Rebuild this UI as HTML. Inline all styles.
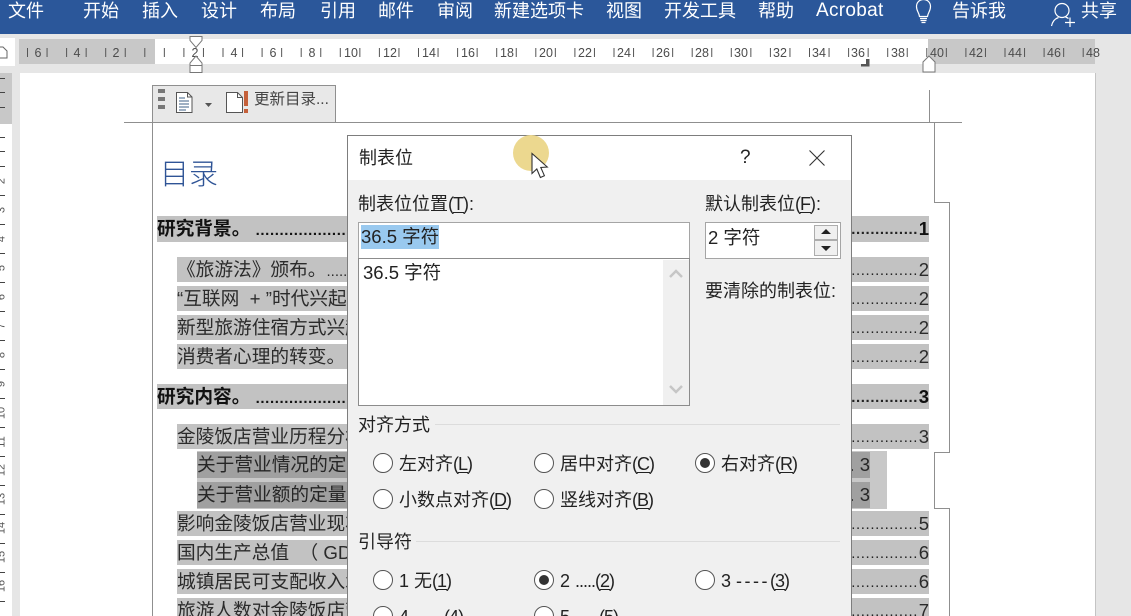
<!DOCTYPE html>
<html lang="zh-CN">
<head>
<meta charset="utf-8">
<title>制表位</title>
<style>
html,body{margin:0;padding:0;width:1131px;height:616px;overflow:hidden;background:#e6e6e6}
body{position:relative;font-family:"Liberation Sans","Noto Sans CJK SC",sans-serif;color:#222}
div,span,svg{position:absolute;box-sizing:border-box}
u{text-underline-offset:2px;text-decoration-thickness:1px;margin:0 -1px}
.bar{left:0;top:0;width:1131px;height:34px;background:#2b579a}
.m{top:-2px;color:#fff;font-size:18px;line-height:26px;white-space:nowrap}
.page{left:20px;top:73px;width:1076px;height:543px;background:#fff;border-right:1px solid #c4c4c4}
.g{background:#8f8f8f}
.r{height:25px;background:#c2c2c2;line-height:25px;font-size:18.7px;white-space:nowrap;color:#2b2b2b}
.r .t{left:0;top:0;width:190px;height:25px;overflow:hidden}
.r .d{right:11px;top:1px;font-size:15px;letter-spacing:.6px;color:#222}
.r .n{right:0;top:0;font-size:18.5px}
.l1{left:157px;width:772px;font-weight:bold;color:#111}
.l1 .d{font-weight:bold}
.l2{left:177px;width:752px}
.dark{left:197px;width:673px;height:26px;background:#a0a0a0;line-height:26px;font-size:18.7px;white-space:nowrap;color:#262626}
.dlg{left:347px;top:135px;width:505px;height:490px;background:#f0f0f0;border:1px solid #7d7d7d}
.hd{left:0;top:0;width:503px;height:44px;background:#fff}
.x{font-size:18px;line-height:24px;white-space:nowrap;color:#222}
.field{background:#fff;border:1px solid #a5a5a5}
.radio{width:20px;height:20px;border:1.3px solid #555;border-radius:50%;background:#fff}
.radio.on::after{content:"";position:absolute;left:3.7px;top:3.7px;width:10px;height:10px;border-radius:50%;background:#333}
.hr{height:1px;background:#dcdcdc}
</style>
</head>
<body>
<div class="bar"></div>
<span class="m" style="left:8px">文件</span>
<span class="m" style="left:83px">开始</span>
<span class="m" style="left:142px">插入</span>
<span class="m" style="left:201px">设计</span>
<span class="m" style="left:260px">布局</span>
<span class="m" style="left:320px">引用</span>
<span class="m" style="left:378px">邮件</span>
<span class="m" style="left:437px">审阅</span>
<span class="m" style="left:494px">新建选项卡</span>
<span class="m" style="left:606px">视图</span>
<span class="m" style="left:664px">开发工具</span>
<span class="m" style="left:758px">帮助</span>
<span class="m" style="left:816px;font-size:19px;letter-spacing:.3px">Acrobat</span>
<span class="m" style="left:952px">告诉我</span>
<span class="m" style="left:1081px">共享</span>
<svg style="left:912px;top:0" width="24" height="26" viewBox="0 0 24 26" fill="none" stroke="#fff" stroke-width="1.2"><path d="M7.5 16.5C7 12.5 4.5 11 4.5 6.5 4.5 2.5 7.5-.5 11.5-.5s7 3 7 7c0 4.500-2.500 6-3 10z"/><path d="M8 18.500h7M8.500 20.500h6M9.500 22.500h4"/></svg>
<svg style="left:1050px;top:0" width="32" height="28" viewBox="0 0 32 28" fill="none" stroke="#fff" stroke-width="1.2"><circle cx="12" cy="10.500" r="7"/><path d="M1.500 26c1-5 4-7.500 7-8.500M15.500 17c1 .3 2 .8 3 1.500"/><path d="M15 22.500h10M20 17.500v9.500"/></svg>

<!-- ruler -->
<svg style="left:0;top:34px" width="1131" height="40" viewBox="0 34 1131 40">
<rect x="0" y="34" width="1131" height="40" fill="#e6e6e6"/>
<rect x="0" y="38" width="15" height="28" fill="#fff"/>
<path d="M0 47h3l4 4v7H0" fill="#fff" stroke="#666"/>
<rect x="19" y="39" width="136" height="25" fill="#c8c8c8"/>
<rect x="155" y="39" width="773" height="25" fill="#fff"/>
<rect x="928" y="39" width="167" height="25" fill="#c8c8c8"/>
<line x1="27" y1="52.500" x2="1098" y2="52.500" stroke="#555" stroke-width="9" stroke-dasharray="1 18.55"/>
<g font-family="Liberation Sans,sans-serif" font-size="12.500" fill="#4c4c4c" text-anchor="middle">
<text x="38" y="57">6</text><text x="77" y="57">4</text><text x="116" y="57">2</text>
<text x="195" y="57">2</text><text x="234" y="57">4</text><text x="273" y="57">6</text><text x="312" y="57">8</text>
<text x="351" y="57">10</text><text x="390" y="57">12</text><text x="429" y="57">14</text><text x="468" y="57">16</text>
<text x="507" y="57">18</text><text x="546" y="57">20</text><text x="585" y="57">22</text><text x="624" y="57">24</text>
<text x="663" y="57">26</text><text x="702" y="57">28</text><text x="741" y="57">30</text><text x="780" y="57">32</text>
<text x="819" y="57">34</text><text x="858" y="57">36</text><text x="898" y="57">38</text><text x="937" y="57">40</text>
<text x="976" y="57">42</text><text x="1015" y="57">44</text><text x="1054" y="57">46</text><text x="1093" y="57">48</text>
</g>
<path d="M190 36.500h12v4l-6 7-6-7z" fill="#fff" stroke="#777"/>
<path d="M196 56l6 7v2.500h-12V63z" fill="#fff" stroke="#777"/>
<rect x="190" y="65.500" width="12" height="7" fill="#fff" stroke="#777"/>
<path d="M929 56l6 6v10h-12V62z" fill="#fff" stroke="#777"/>
<path d="M866 59h3.500v7.500H861V64h5z" fill="#555"/>
</svg>

<div class="page"></div>
<!-- vertical ruler -->
<svg style="left:0;top:73px" width="20" height="543" viewBox="0 73 20 543">
<rect x="0" y="73" width="12" height="543" fill="#fff"/>
<rect x="0" y="73" width="12" height="51" fill="#c8c8c8"/>
<rect x="12" y="73" width="8" height="543" fill="#e6e6e6"/>
<path d="M0 78.500h5M0 92.500h5M0 107.500h5M0 137.500h5M0 151.500h5M0 166.500h5M0 195.500h5M0 224.500h5M0 253.500h5M0 282.500h5M0 311.500h5M0 340.500h5M0 369.500h5M0 398.500h5M0 427.500h5M0 456.500h5M0 485.500h5M0 514.500h5M0 543.500h5M0 572.500h5M0 601.500h5" stroke="#444"/>
<g font-family="Liberation Sans,sans-serif" font-size="11" fill="#555" text-anchor="middle">
<text transform="translate(4.500 181) rotate(-90)">2</text><text transform="translate(4.500 210) rotate(-90)">3</text>
<text transform="translate(4.500 239) rotate(-90)">4</text><text transform="translate(4.500 268) rotate(-90)">5</text>
<text transform="translate(4.500 297) rotate(-90)">6</text><text transform="translate(4.500 326) rotate(-90)">7</text>
<text transform="translate(4.500 355) rotate(-90)">8</text><text transform="translate(4.500 384) rotate(-90)">9</text>
<text transform="translate(4.500 413) rotate(-90)">10</text><text transform="translate(4.500 442) rotate(-90)">11</text>
<text transform="translate(4.500 470) rotate(-90)">12</text><text transform="translate(4.500 499) rotate(-90)">13</text>
<text transform="translate(4.500 528) rotate(-90)">14</text><text transform="translate(4.500 557) rotate(-90)">15</text>
<text transform="translate(4.500 586) rotate(-90)">16</text>
</g>
</svg>

<!-- guides -->
<div class="g" style="left:124px;top:122px;width:838px;height:1px"></div>
<div class="g" style="left:152px;top:122px;width:1px;height:494px"></div>
<div class="g" style="left:929px;top:90px;width:1px;height:32px"></div>
<div class="g" style="left:934px;top:122px;width:1px;height:80px"></div>
<div class="g" style="left:934px;top:202px;width:16px;height:1px"></div>
<div class="g" style="left:949px;top:202px;width:1px;height:250px"></div>
<div class="g" style="left:934px;top:452px;width:16px;height:1px"></div>
<div class="g" style="left:934px;top:452px;width:1px;height:56px"></div>
<div class="g" style="left:934px;top:508px;width:16px;height:1px"></div>
<div class="g" style="left:949px;top:508px;width:1px;height:108px"></div>

<!-- TOC toolbar -->
<div style="left:152px;top:85px;width:184px;height:38px;background:#e8e8e8;border:1px solid #8f8f8f"></div>
<div style="left:158px;top:89px;width:7px;height:4px;background:#777"></div>
<div style="left:158px;top:97px;width:7px;height:4px;background:#777"></div>
<div style="left:158px;top:105px;width:7px;height:4px;background:#777"></div>
<svg style="left:174px;top:90px" width="40" height="26" viewBox="0 0 40 26" fill="#fff" stroke="#555"><path d="M2.500 2.500h11l4.500 4.500v15.500H2.500z"/><path d="M13.500 2.500V7H18" fill="none"/><path d="M5 8h6M5 11h10M5 14h10M5 17h10M5 20h7" stroke="#3f6187" stroke-width="1"/><path d="M31 13h7l-3.500 4z" fill="#555" stroke="none"/></svg>
<svg style="left:224px;top:90px" width="28" height="26" viewBox="0 0 28 26"><path d="M2.500 2.500h11l5 5v15h-16z" fill="#fff" stroke="#555"/><path d="M13.500 2.500v5h5" fill="none" stroke="#555"/><rect x="20" y="1" width="4" height="15" fill="#c5603a"/><rect x="20" y="19" width="4" height="4" fill="#c5603a"/></svg>
<span style="left:254px;top:88px;font-size:15.500px;line-height:24px;color:#444;white-space:nowrap">更新目录...</span>

<!-- TOC -->
<span style="left:160px;top:155px;font-size:29px;line-height:40px;color:#2f5496;font-weight:300">目录</span>

<div class="r l1" style="top:216px;height:26px"><span class="t">研究背景。 <span style="position:static;font-size:15px;letter-spacing:.6px">..............................</span></span><span class="d">...............</span><span class="n">1</span></div>
<div class="r l2" style="top:257px"><span class="t">《旅游法》颁布。<span style="position:static;font-size:15px">.......</span></span><span class="d">...............</span><span class="n">2</span></div>
<div class="r l2" style="top:286px"><span class="t">“互联网&nbsp;&nbsp;+&nbsp;”时代兴起。</span><span class="d">...............</span><span class="n">2</span></div>
<div class="r l2" style="top:315px"><span class="t">新型旅游住宿方式兴起。</span><span class="d">...............</span><span class="n">2</span></div>
<div class="r l2" style="top:344px"><span class="t">消费者心理的转变。</span><span class="d">...............</span><span class="n">2</span></div>
<div class="r l1" style="top:384px"><span class="t">研究内容。 <span style="position:static;font-size:15px;letter-spacing:.6px">..............................</span></span><span class="d">...............</span><span class="n">3</span></div>
<div class="r l2" style="top:424px"><span class="t">金陵饭店营业历程分析</span><span class="d">...............</span><span class="n">3</span></div>
<div style="left:197px;top:451px;width:690px;height:58px;background:#c8c8c8"></div>
<div class="dark" style="top:452px"><span style="left:0;top:0;width:150px;overflow:hidden;height:26px">关于营业情况的定性</span><span style="right:0;top:0;font-size:18.500px">. 3</span></div>
<div class="dark" style="top:482px"><span style="left:0;top:0;width:150px;overflow:hidden;height:26px">关于营业额的定量分</span><span style="right:0;top:0;font-size:18.500px">. 3</span></div>
<div class="r l2" style="top:511px"><span class="t">影响金陵饭店营业现状</span><span class="d">...............</span><span class="n">5</span></div>
<div class="r l2" style="top:540px"><span class="t">国内生产总值&nbsp;&nbsp;（ GDP</span><span class="d">...............</span><span class="n">6</span></div>
<div class="r l2" style="top:569px"><span class="t">城镇居民可支配收入水平</span><span class="d">...............</span><span class="n">6</span></div>
<div class="r l2" style="top:598px"><span class="t">旅游人数对金陵饭店营业</span><span class="d">...............</span><span class="n">7</span></div>

<!-- dialog -->
<div class="dlg">
<div class="hd"></div>
<span class="x" style="left:11px;top:10px">制表位</span>
<span class="x" style="left:392px;top:10px;font-size:19px">?</span>
<svg style="left:460px;top:13px" width="18" height="18" viewBox="0 0 18 18" stroke="#333" stroke-width="1.100" fill="none"><path d="M1.500 1.500l15 15M16.500 1.500l-15 15"/></svg>

<span class="x" style="left:10px;top:56px">制表位位置(<u>T</u>):</span>
<span class="x" style="left:357px;top:56px">默认制表位(<u>F</u>):</span>
<div class="field" style="left:10px;top:86px;width:332px;height:37px"></div>
<div style="left:13px;top:89px;width:78px;height:24px;background:#99c9ef"></div>
<span class="x" style="left:13px;top:89px;font-size:18.500px">36.5 字符</span>
<div class="field" style="left:10px;top:122px;width:332px;height:148px;border-color:#8c8c8c"></div>
<div style="left:315px;top:124px;width:26px;height:145px;background:#f0f0f0"></div>
<svg style="left:318px;top:130px" width="20" height="14" viewBox="0 0 20 14" fill="none" stroke="#c6c6c6" stroke-width="2.500"><path d="M4 11l6-6 6 6"/></svg>
<svg style="left:318px;top:247px" width="20" height="14" viewBox="0 0 20 14" fill="none" stroke="#c6c6c6" stroke-width="2.500"><path d="M4 3l6 6 6-6"/></svg>
<span class="x" style="left:15px;top:125px;font-size:18.500px">36.5 字符</span>

<div class="field" style="left:357px;top:86px;width:136px;height:37px"></div>
<span class="x" style="left:360px;top:90px;font-size:18.500px">2 字符</span>
<div style="left:466px;top:89px;width:24px;height:15px;background:#f0f0f0;border:1px solid #adadad"></div>
<div style="left:466px;top:104px;width:24px;height:16px;background:#f0f0f0;border:1px solid #adadad"></div>
<svg style="left:466px;top:89px" width="24" height="31" viewBox="0 0 24 31" fill="#222"><path d="M12 4l5 5H7zM7 21h10l-5 5z"/></svg>

<span class="x" style="left:357px;top:143px">要清除的制表位:</span>

<span class="x" style="left:10px;top:277px">对齐方式</span>
<div class="hr" style="left:87px;top:288px;width:405px"></div>
<div class="radio" style="left:25px;top:317px"></div><span class="x" style="left:51px;top:316px">左对齐(<u>L</u>)</span>
<div class="radio" style="left:186px;top:317px"></div><span class="x" style="left:212px;top:316px">居中对齐(<u>C</u>)</span>
<div class="radio on" style="left:347px;top:317px"></div><span class="x" style="left:373px;top:316px">右对齐(<u>R</u>)</span>
<div class="radio" style="left:25px;top:353px"></div><span class="x" style="left:51px;top:352px">小数点对齐(<u>D</u>)</span>
<div class="radio" style="left:186px;top:353px"></div><span class="x" style="left:212px;top:352px">竖线对齐(<u>B</u>)</span>

<span class="x" style="left:10px;top:394px">引导符</span>
<div class="hr" style="left:68px;top:405px;width:424px"></div>
<div class="radio" style="left:25px;top:434px"></div><span class="x" style="left:51px;top:433px">1 无(<u>1</u>)</span>
<div class="radio on" style="left:186px;top:434px"></div><span class="x" style="left:212px;top:433px">2 <span style="position:static;letter-spacing:-1px">.....</span>(<u>2</u>)</span>
<div class="radio" style="left:347px;top:434px"></div><span class="x" style="left:373px;top:433px">3 <span style="position:static;letter-spacing:2.500px">----</span>(<u>3</u>)</span>
<div class="radio" style="left:25px;top:470px"></div><span class="x" style="left:51px;top:469px">4 ___(<u>4</u>)</span>
<div class="radio" style="left:186px;top:470px"></div><span class="x" style="left:212px;top:469px">5 ····(<u>5</u>)</span>
</div>

<!-- cursor highlight -->
<div style="left:513px;top:135px;width:36px;height:36px;border-radius:50%;background:#ecd88f"></div>
<svg style="left:528px;top:150px" width="26" height="32" viewBox="0 0 26 32"><path d="M4 3.500v20l4.800-4.500 3.600 8.500 4-1.800-3.600-8.200 6.500-.5z" fill="#fff" stroke="#333" stroke-width="1.100"/></svg>
</body>
</html>
